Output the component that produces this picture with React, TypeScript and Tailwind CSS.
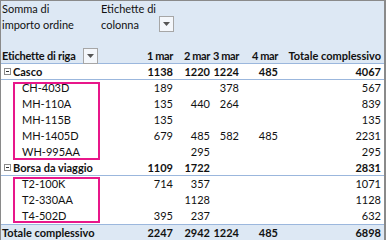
import React from "react";

type Row = {
  label: string;
  values: (number | null)[];
  total: number;
  kind: "group" | "item";
};

const rows: Row[] = [
  { label: "Casco", values: [1138, 1220, 1224, 485], total: 4067, kind: "group" },
  { label: "CH-403D", values: [189, null, 378, null], total: 567, kind: "item" },
  { label: "MH-110A", values: [135, 440, 264, null], total: 839, kind: "item" },
  { label: "MH-115B", values: [135, null, null, null], total: 135, kind: "item" },
  { label: "MH-1405D", values: [679, 485, 582, 485], total: 2231, kind: "item" },
  { label: "WH-995AA", values: [null, 295, null, null], total: 295, kind: "item" },
  { label: "Borsa da viaggio", values: [1109, 1722, null, null], total: 2831, kind: "group" },
  { label: "T2-100K", values: [714, 357, null, null], total: 1071, kind: "item" },
  { label: "T2-330AA", values: [null, 1128, null, null], total: 1128, kind: "item" },
  { label: "T4-502D", values: [395, 237, null, null], total: 632, kind: "item" },
];

const cols = "grid grid-cols-[99px_75px_37px_29px_39px_104px]";
const num = "flex justify-end whitespace-nowrap pr-[2px]";
const numLast = "flex justify-end whitespace-nowrap pr-[3px]";
const month = "flex justify-end whitespace-nowrap pr-[2px] tracking-[-0.4px]";

function DropButton() {
  return (
    <div className="w-[15px] h-[16px] shrink-0 border border-[#a6a6a6] bg-[#f4f7fb] flex items-center justify-center">
      <svg width="7" height="4" viewBox="0 0 7 4">
        <path d="M0 0h7L3.5 4z" fill="#555" />
      </svg>
    </div>
  );
}

function CollapseIcon() {
  return (
    <div className="w-[7px] h-[7px] shrink-0 border border-[#8c8c8c] bg-white flex items-center justify-center">
      <div className="w-[3px] h-px bg-[#333]" />
    </div>
  );
}

export default function App() {
  return (
    <div className="relative w-[386px] h-[240px] overflow-hidden bg-white border-l border-t border-r-2 border-[#8a8a8a] font-['Lato',sans-serif] text-[11px] text-[#111]">
      <div className="bg-[#dde8f4]">
        <div className={`${cols} h-[32px]`}>
          <div className="pl-[1px] leading-[16px] whitespace-nowrap">
            Somma di
            <br />
            importo ordine
          </div>
          <div className="col-span-5 flex">
            <div className="w-[75px] flex justify-between items-end pr-[1px]">
              <div className="pl-[1px] leading-[16px] whitespace-nowrap">
                Etichette di
                <br />
                colonna
              </div>
              <div className="mb-[1px]">
                <DropButton />
              </div>
            </div>
          </div>
        </div>
        <div className="h-[15px]" />
        <div className={`${cols} h-[16px] font-bold leading-[16px] border-b border-[#9bb7dd]`}>
          <div className="pl-[1px] flex items-center justify-between pr-[2px]">
            <span className="whitespace-nowrap tracking-[-0.2px]">Etichette di riga</span>
            <DropButton />
          </div>
          <div className={month}>1 mar</div>
          <div className={month}>2 mar</div>
          <div className={month}>3 mar</div>
          <div className={month}>4 mar</div>
          <div className={numLast}>Totale complessivo</div>
        </div>
      </div>

      {rows.map((r) =>
        r.kind === "group" ? (
          <div
            key={r.label}
            className={`${cols} h-[16px] font-bold leading-[15px] border-b border-[#9bb7dd]`}
          >
            <div className="flex items-center gap-[2px] pl-[3px] whitespace-nowrap">
              <CollapseIcon />
              <span>{r.label}</span>
            </div>
            {r.values.map((v, i) => (
              <div key={i} className={num}>
                {v ?? ""}
              </div>
            ))}
            <div className={numLast}>{r.total}</div>
          </div>
        ) : (
          <div key={r.label} className={`${cols} h-[16px] leading-[16px]`}>
            <div className="pl-[21px] whitespace-nowrap">{r.label}</div>
            {r.values.map((v, i) => (
              <div key={i} className={num}>
                {v ?? ""}
              </div>
            ))}
            <div className={numLast}>{r.total}</div>
          </div>
        )
      )}

      <div className={`${cols} h-[16px] font-bold leading-[15px] bg-[#dde8f4] border-t border-[#9bb7dd]`}>
        <div className="pl-[1px] whitespace-nowrap">Totale complessivo</div>
        <div className={num}>2247</div>
        <div className={num}>2942</div>
        <div className={num}>1224</div>
        <div className={num}>485</div>
        <div className={numLast}>6898</div>
      </div>

      {/* highlight boxes */}
      <div className="absolute left-[12px] top-[81px] w-[87px] h-[78px] border-2 border-[#e8178a]" />
      <div className="absolute left-[12px] top-[176px] w-[87px] h-[46px] border-2 border-[#e8178a]" />
    </div>
  );
}
